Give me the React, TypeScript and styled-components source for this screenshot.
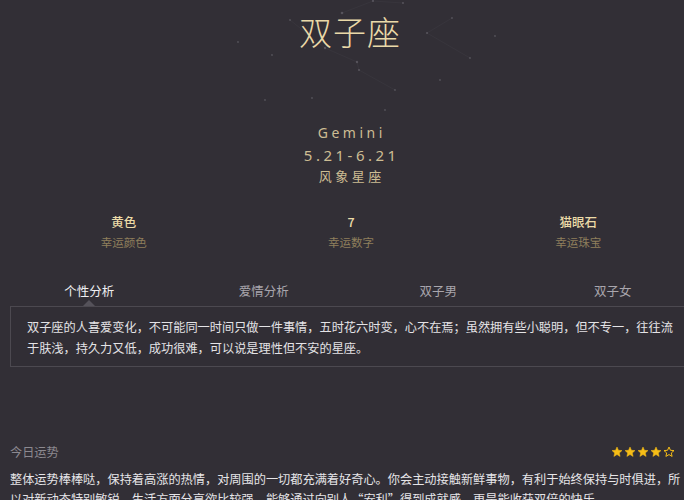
import React from "react";
import styled, { createGlobalStyle } from "styled-components";

const Global = createGlobalStyle`
  html, body { margin: 0; padding: 0; background: #322f36; overflow: hidden; }
  body { font-family: "Noto Sans CJK SC", "Noto Sans", sans-serif; }
`;

const Page = styled.div`
  width: 700px;
  background: #322f36;
  position: relative;
`;

const Header = styled.header`
  position: relative;
  display: flex;
  flex-direction: column;
  align-items: center;
  padding-top: 11px;
`;

const StarField = styled.svg`
  position: absolute;
  left: 0;
  top: 0;
  pointer-events: none;
`;

const Title = styled.h1`
  position: relative;
  margin: 0;
  font-family: "Noto Sans CJK SC", sans-serif;
  font-weight: 300;
  font-size: 33px;
  line-height: 40px;
  letter-spacing: 1px;
  color: #ead9a8;
`;

const Sub = styled.div<{ $mt?: number; $size: number; $lh: number }>`
  position: relative;
  margin-top: ${(p) => p.$mt ?? 0}px;
  font-family: "Noto Sans", "Noto Sans CJK SC", sans-serif;
  font-size: ${(p) => p.$size}px;
  line-height: ${(p) => p.$lh}px;
  letter-spacing: 3.5px;
  padding-left: 3.5px;
  color: #cdbd93;
`;

const InfoRow = styled.div`
  display: grid;
  grid-template-columns: repeat(3, 1fr);
  margin-top: 26px;
  padding: 0 8px 0 10px;
`;

const InfoItem = styled.div`
  display: flex;
  flex-direction: column;
  align-items: center;
`;

const InfoValue = styled.div`
  font-size: 12.5px;
  line-height: 20px;
  font-weight: 500;
  color: #ecdba8;
`;

const InfoLabel = styled.div`
  font-size: 11.5px;
  line-height: 20px;
  color: #8f7f5c;
`;

const Tabs = styled.div`
  display: grid;
  grid-template-columns: repeat(4, 1fr);
  margin-top: 27px;
  padding: 0 0 0 2px;
`;

const Tab = styled.div<{ $active?: boolean }>`
  position: relative;
  text-align: center;
  font-size: 12.5px;
  line-height: 20px;
  padding-top: 2px;
  height: 25px;
  color: ${(p) => (p.$active ? "#f0eff2" : "#a9a6ad")};
`;

const Caret = styled.span`
  position: absolute;
  left: 50%;
  bottom: 0;
  margin-left: -6px;
  width: 0;
  height: 0;
  border-left: 6px solid transparent;
  border-right: 6px solid transparent;
  border-bottom: 6px solid #55525a;
`;

const Box = styled.div`
  margin: 0 10px;
  border: 1px solid #4c4950;
  background: #312e35;
  padding: 10px 10px 7px 16px;
  font-size: 12.2px;
  line-height: 21px;
  color: #e4e3e6;
`;

const Fortune = styled.section`
  margin-top: 75px;
  padding: 0 10px;
`;

const FortuneHead = styled.div`
  display: flex;
  align-items: center;
  justify-content: space-between;
  height: 20px;
`;

const FortuneTitle = styled.div`
  font-size: 12.2px;
  line-height: 20px;
  color: #8c8990;
`;

const Stars = styled.div`
  display: flex;
  align-items: center;
  gap: 1px;
  padding-right: 2px;
`;

const More = styled.span`
  margin-left: 8px;
  color: #8c8990;
  font-size: 12px;
`;

const FortuneText = styled.p`
  margin: 7px 0 0;
  font-size: 12.2px;
  line-height: 20px;
  color: #e6e5e8;
`;

const Star = ({ filled }: { filled: boolean }) => (
  <svg width="12" height="12" viewBox="0 0 24 24">
    <path
      d="M12 2l2.9 6.6 7.1.6-5.4 4.7 1.6 7-6.2-3.8-6.2 3.8 1.6-7L2 9.2l7.1-.6z"
      fill={filled ? "#f6bd16" : "none"}
      stroke="#f6bd16"
      strokeWidth={filled ? 1 : 2}
      strokeLinejoin="round"
    />
  </svg>
);

const dots: [number, number, number][] = [
  [342, 13, 1.3], [373, 1, 1.1], [403, 3, 1], [325, 48, 1.2], [357, 62, 1.2],
  [359, 70, 1.1], [427, 33, 1.1], [290, 20, 0.9], [452, 18, 0.9], [272, 55, 0.9],
  [470, 58, 0.9], [395, 90, 0.9], [312, 98, 0.9], [440, 80, 0.9], [265, 100, 0.9],
  [495, 36, 0.9], [238, 42, 0.9], [385, 110, 0.9],
];

const lines: [number, number, number, number][] = [
  [342, 13, 373, 1], [373, 1, 403, 3], [325, 48, 357, 62], [357, 62, 359, 70],
  [359, 70, 395, 90], [427, 33, 452, 18], [325, 48, 290, 20], [427, 33, 470, 58],
];

const App: React.FC = () => (
  <Page>
    <Global />
    <Header>
      <StarField width="700" height="125" viewBox="0 0 700 125">
        {lines.map(([x1, y1, x2, y2], i) => (
          <line key={i} x1={x1} y1={y1} x2={x2} y2={y2} stroke="#6a6670" strokeOpacity="0.18" strokeWidth="0.6" />
        ))}
        {dots.map(([cx, cy, r], i) => (
          <circle key={i} cx={cx} cy={cy} r={r} fill="#8a8690" fillOpacity="0.4" />
        ))}
      </StarField>
      <Title>双子座</Title>
      <Sub $mt={71} $size={14} $lh={22}>Gemini</Sub>
      <Sub $size={15} $lh={22}>5.21-6.21</Sub>
      <Sub $size={13} $lh={20}>风象星座</Sub>
    </Header>

    <InfoRow>
      <InfoItem>
        <InfoValue>黄色</InfoValue>
        <InfoLabel>幸运颜色</InfoLabel>
      </InfoItem>
      <InfoItem>
        <InfoValue>7</InfoValue>
        <InfoLabel>幸运数字</InfoLabel>
      </InfoItem>
      <InfoItem>
        <InfoValue>猫眼石</InfoValue>
        <InfoLabel>幸运珠宝</InfoLabel>
      </InfoItem>
    </InfoRow>

    <Tabs>
      <Tab $active>
        个性分析
        <Caret />
      </Tab>
      <Tab>爱情分析</Tab>
      <Tab>双子男</Tab>
      <Tab>双子女</Tab>
    </Tabs>

    <Box>
      双子座的人喜爱变化，不可能同一时间只做一件事情，五时花六时变，心不在焉；虽然拥有些小聪明，但不专一，往往流于肤浅，持久力又低，成功很难，可以说是理性但不安的星座。
    </Box>

    <Fortune>
      <FortuneHead>
        <FortuneTitle>今日运势</FortuneTitle>
        <Stars>
          <Star filled />
          <Star filled />
          <Star filled />
          <Star filled />
          <Star filled={false} />
          <More>›</More>
        </Stars>
      </FortuneHead>
      <FortuneText>
        整体运势棒棒哒，保持着高涨的热情，对周围的一切都充满着好奇心。你会主动接触新鲜事物，有利于始终保持与时俱进，所以对新动态特别敏锐。生活方面分享欲比较强，能够通过向别人“安利”得到成就感，更是能收获双倍的快乐。
      </FortuneText>
    </Fortune>
  </Page>
);

export default App;
